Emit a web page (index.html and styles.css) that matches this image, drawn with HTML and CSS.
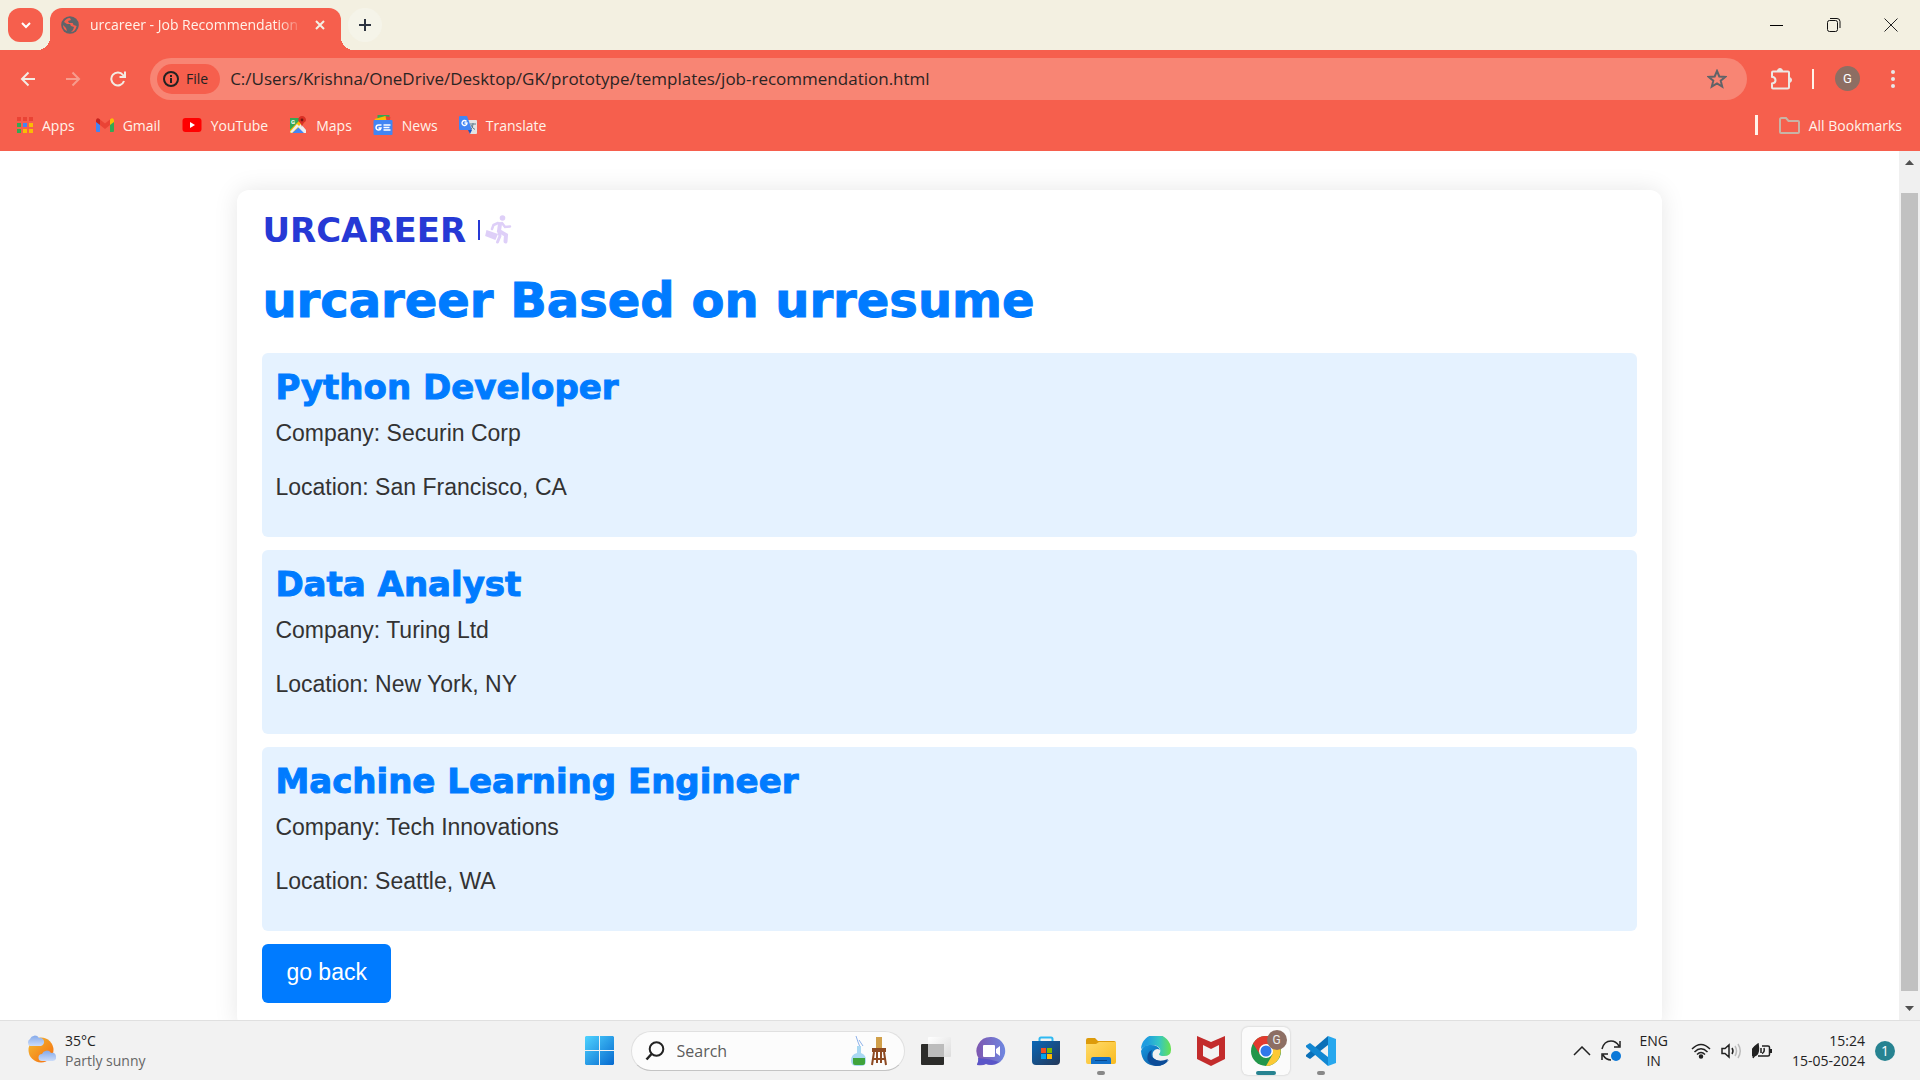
FILE: index.html
```html
<!DOCTYPE html>
<html lang="en">
<head>
<meta charset="utf-8">
<meta name="viewport" content="width=device-width, initial-scale=1">
<title>urcareer - Job Recommendation</title>
<link rel="stylesheet" href="styles.css">
</head>
<body>
<div class="desktop">
  <header class="tabstrip">
    <button class="tab-search" aria-label="Search tabs"><svg width="12" height="12" viewBox="0 0 12 12" fill="none" stroke="#fff" stroke-width="2"><path d="M2 4l4 4 4-4"/></svg></button>
    <div class="tab">
      <svg width="18" height="18" viewBox="0 0 18 18"><circle cx="9" cy="9" r="8.8" fill="#5f6368"/><path d="M9 2c-3 0-5 2-6 4l3 2h3l1 2 3 1-1 3-2 2c3 0 5-3 5.600-6l-3-1-1-2H8l-1-2 3-1z" fill="#f65f4d"/><path d="M2 9l3 3 1 3C3 14 2 11 2 9z" fill="#f65f4d"/></svg>
      <span class="tab-title">urcareer - Job Recommendation</span>
      <button class="plain" aria-label="Close tab"><svg width="12" height="12" viewBox="0 0 12 12" fill="none" stroke="#f4f0e4" stroke-width="2"><path d="M2 2l8 8M10 2l-8 8"/></svg></button>
    </div>
    <button class="new-tab" aria-label="New tab"><svg width="14" height="14" viewBox="0 0 14 14" stroke="#2d3440" stroke-width="2"><path d="M7 1v12M1 7h12"/></svg></button>
    <div class="window-buttons">
      <button class="plain" aria-label="Minimize"><svg width="14" height="14" viewBox="0 0 14 14" stroke="#000"><path d="M0 7.500h13"/></svg></button>
      <button class="plain" aria-label="Restore"><svg width="14" height="14" viewBox="0 0 14 14" fill="none" stroke="#111"><rect x=".5" y="2.500" width="10" height="11" rx="2"/><path d="M3 .5h7a3 3 0 0 1 3 3V10" stroke-width="1"/></svg></button>
      <button class="plain" aria-label="Close"><svg width="14" height="14" viewBox="0 0 14 14" stroke="#222"><path d="M.5.5l13 13M13.500.5l-13 13"/></svg></button>
    </div>
  </header>

  <nav class="toolbar">
    <div class="nav-buttons">
      <button class="plain" aria-label="Back"><svg width="16" height="16" viewBox="0 0 16 16" fill="none" stroke="#f3ece4" stroke-width="2"><path d="M15 8H2M8.500 1.500L2 8l6.500 6.500"/></svg></button>
      <button class="plain" aria-label="Forward"><svg width="16" height="16" viewBox="0 0 16 16" fill="none" stroke="#f79c8d" stroke-width="2"><path d="M1 8h13M7.500 1.500L14 8l-6.500 6.500"/></svg></button>
      <button class="plain" aria-label="Reload"><svg width="16" height="16" viewBox="0 0 16 16" fill="none" stroke="#f3ece4" stroke-width="2"><path d="M14 10a6.500 6.500 0 1 1-1-6l1.500 2M15 .5V6H9.500"/></svg></button>
    </div>
    <div class="omnibox">
      <button class="chip"><svg width="16" height="16" viewBox="0 0 16 16"><circle cx="8" cy="8" r="7" fill="none" stroke="#222" stroke-width="2"/><path d="M8 7v5M8 4v2" stroke="#222" stroke-width="2"/></svg>File</button>
      <input class="url" aria-label="Address" value="C:/Users/Krishna/OneDrive/Desktop/GK/prototype/templates/job-recommendation.html">
      <button class="plain" aria-label="Bookmark this page"><svg width="20" height="20" viewBox="0 0 20 20" fill="none" stroke="#606368" stroke-width="2"><path d="M10 2l2.300 5.500 6 .4-4.600 3.800 1.500 5.800L10 14.300l-5.200 3.200 1.500-5.800L1.700 7.900l6-.4z"/></svg></button>
    </div>
    <div class="toolbar-end">
      <button class="plain" aria-label="Extensions"><svg width="22" height="22" viewBox="0 0 22 22"><path d="M2 4.500Q2 3.500 3 3.500h15q1 0 1 1V19q0 1.500-1.500 1.500H3Q2 20.500 2 19.500v-4q3.500-.5 3.500-3.300T2 8.800z" fill="none" stroke="#ece8e4" stroke-width="2"/><path d="M7.500 3a2.500 2.500 0 0 1 5 0zM19 9.500a2.500 2.500 0 0 1 0 5z" fill="#ece8e4" stroke="#ece8e4"/></svg></button>
      <span class="rule thin"></span>
      <button class="avatar">G</button>
      <button class="plain" aria-label="Menu"><svg width="4" height="20" viewBox="0 0 4 20" fill="#e8e8e8"><circle cx="2" cy="3" r="2"/><circle cx="2" cy="10" r="2"/><circle cx="2" cy="17" r="2"/></svg></button>
    </div>
  </nav>

  <nav class="bookmarks">
    <a href="#"><svg width="16" height="18" viewBox="0 0 16 18"><path fill="#ea4335" d="M0 1h4v4H0zM6 1h4v4H6zM12 1h4v4h-4z"/><path fill="#34a853" d="M0 7h4v4H0zM0 13h4v4H0z"/><path fill="#4285f4" d="M6 7h4v4H6z"/><path fill="#fbbc04" d="M12 7h4v4h-4zM6 13h4v4H6zM12 13h4v4h-4z"/></svg>Apps</a>
    <a href="#"><svg width="18" height="14" viewBox="0 0 18 14"><path fill="#4285f4" d="M0 3l4 3v8H1q-1 0-1-1z"/><path fill="#34a853" d="M14 6l4-3v10q0 1-1 1h-3z"/><path fill="#fbbc04" d="M14 1.500Q17-1 18 2v2l-4 3z"/><path fill="#c5221f" d="M0 2Q1-1 4 1.500V7L0 4z"/><path fill="#ea4335" d="M4 1.500l5 4 5-4V7l-5 4-5-4z"/></svg>Gmail</a>
    <a href="#"><svg width="20" height="14" viewBox="0 0 19 14"><rect width="19" height="14" rx="3" fill="#f00"/><path d="M7.500 4v6l5-3z" fill="#fff"/></svg>YouTube</a>
    <a href="#"><svg width="18" height="18" viewBox="0 0 18 18"><path fill="#34a853" d="M1 2h12L1 15z"/><path fill="#4285f4" d="M9 10l7 7H2z"/><path fill="#fbbc04" d="M1 14L13 2l3 4L3 17H1z"/><path fill="#eee" d="M9 11l3-3 5 6v3h-2zM1 16l7-8 2 2-7 7z"/><path fill="#d93025" d="M13 0a3.700 3.700 0 0 0-3.700 4c0 2 3.200 3 3.700 7 .5-4 4-5 4-7A3.900 3.900 0 0 0 13 0z"/><circle cx="13" cy="4" r="1.400" fill="#7b1712"/><text x="2" y="8" class="tiny">G</text></svg>Maps</a>
    <a href="#"><svg width="20" height="20" viewBox="0 0 19 20"><path fill="#34a853" d="M4 0h12v5H4z"/><path fill="#ea4335" d="M11 1l6 1-1 6-7-2z"/><path fill="#fbbc04" d="M1 4l11-3 1 5H2z"/><rect y="5" width="19" height="15" rx="1" fill="#4285f4"/><path d="M8 10H5a2.500 2.500 0 1 0 2.500 3H5M10 10h7M10 12.500h6M10 15h7" fill="none" stroke="#fff" stroke-width="1.500"/></svg>News</a>
    <a href="#"><svg width="18" height="18" viewBox="0 0 18 18"><path d="M7 4h10q1 0 1 1v12q0 1-1 1H11z" fill="#e3e3e3"/><path d="M1 0h7l5 14H1q-1 0-1-1V1q0-1 1-1z" fill="#4285f4"/><path d="M9 14h4l-2 4z" fill="#1a56c4"/><path d="M7.500 5.500A2.500 2.500 0 1 0 8 7H5.500" fill="none" stroke="#fff" stroke-width="1.400"/><path d="M11 8h6M14 7v1q0 4-2.500 5.500M12 9q1 3 4 4.500" fill="none" stroke="#607d8b"/></svg>Translate</a>
    <span class="rule all-rule"></span>
    <a href="#" class="all"><svg width="21" height="17" viewBox="0 0 21 17" fill="none" stroke="#c9b3a5" stroke-width="2"><path d="M1 2.500Q1 1 2.500 1H7l2.500 3H19q1 0 1 1v10q0 1-1 1H2q-1 0-1-1z"/></svg>All Bookmarks</a>
  </nav>

  <div class="viewport">
    <main class="page">
      <section class="container">
        <div class="logo">
          <span class="wordmark">URCAREER</span><span class="logo-bar"></span>
          <svg width="27" height="29" viewBox="0 0 27 29" fill="none" stroke="#decff8" stroke-linecap="round"><circle cx="17.500" cy="3" r="2.800" fill="#decff8" stroke="none"/><path d="M15 9l-1 7 7 4-.5 6.500" stroke-width="4"/><path d="M14 18l1 3-2.500 6" stroke-width="3"/><path d="M13 8L8.500 10 7 14M17 8l3 4 5-.5" stroke-width="2.500"/><path d="M2 16l10 3.500-2 4.500L1 20.500z" fill="#decff8" stroke-width="1.500"/></svg>
        </div>
        <h1>urcareer Based on urresume</h1>
        <article class="job"><h2>Python Developer</h2><p>Company: Securin Corp</p><p>Location: San Francisco, CA</p></article>
        <article class="job"><h2>Data Analyst</h2><p>Company: Turing Ltd</p><p>Location: New York, NY</p></article>
        <article class="job"><h2>Machine Learning Engineer</h2><p>Company: Tech Innovations</p><p>Location: Seattle, WA</p></article>
        <button class="go-back">go back</button>
      </section>
    </main>
    <div class="scrollbar">
      <svg width="9" height="5" viewBox="0 0 9 5"><path d="M0 5l4.500-5L9 5z" fill="#505050"/></svg>
      <span class="thumb"></span>
      <svg width="9" height="5" viewBox="0 0 9 5"><path d="M0 0l4.500 5L9 0z" fill="#505050"/></svg>
    </div>
  </div>

  <footer class="taskbar">
    <div class="weather">
      <svg width="30" height="28" viewBox="0 0 30 28"><defs><linearGradient id="sun" x2="1" y2="1"><stop stop-color="#f3bd35"/><stop offset="1" stop-color="#f66a0c"/></linearGradient><linearGradient id="cloud" x2="0" y2="1"><stop stop-color="#84a9ea"/><stop offset="1" stop-color="#ccdcf9"/></linearGradient></defs><circle cx="15" cy="15" r="12.500" fill="url(#sun)"/><path d="M4 11a4 4 0 0 1 0-7 5 5 0 0 1 9-1 4 4 0 0 1 2 8z" fill="url(#cloud)"/><path d="M16 26a3.500 3.500 0 0 1 0-7 5 5 0 0 1 9-1 4 4 0 0 1 2 8z" fill="url(#cloud)"/></svg>
      <p>35°C<br><span class="muted">Partly sunny</span></p>
    </div>
    <div class="apps">
      <button class="app" aria-label="Start"><svg width="29" height="29" viewBox="0 0 29 29"><defs><linearGradient id="win" x2="1" y2="1"><stop stop-color="#4fd3ff"/><stop offset="1" stop-color="#0669cf"/></linearGradient></defs><path fill="url(#win)" d="M1 0h13v14H0V1zM15 0h13l1 1v13H15zM0 15h14v14H1l-1-1zM15 15h14v13l-1 1H15z"/></svg></button>
      <div class="search">
        <svg width="20" height="20" viewBox="0 0 20 20" fill="none" stroke="#222" stroke-width="2"><circle cx="11.500" cy="8" r="6.800"/><path d="M6.500 13L1.500 18.500" stroke-width="2.500"/></svg>
        <input aria-label="Search" placeholder="Search">
        <svg width="38" height="32" viewBox="0 0 38 32"><path d="M6 1l2 6 2 5M9 5l4 6" stroke="#8fb2ea" fill="none"/><path d="M7 11h4v7a8 8 0 0 1 5 8q0 5-5 5H7q-6 0-6-5a8 8 0 0 1 6-8z" fill="#a9d8f2"/><path d="M3 23h12v5q0 2-3 2H5q-2 0-2-2z" fill="#3fa33b"/><path d="M26 2h6v11h-6z" fill="#d1a04a"/><path d="M22 13h14v4H22z" fill="#8d4a22"/><path d="M24 17l-2 13M34 17l2 13M27 17v11M31 17v11M23 24h12" stroke="#8d4a22" stroke-width="2"/></svg>
      </div>
      <button class="app" aria-label="Task view"><svg width="30" height="30" viewBox="0 0 30 30"><defs><linearGradient id="tv" x2="1" y2="1"><stop stop-color="#fff"/><stop offset="1" stop-color="#dcdcdc"/></linearGradient></defs><rect y="8" width="23" height="21" rx="1" fill="#2c2c2a"/><rect x="7" y="1" width="23" height="20" rx="1" fill="url(#tv)"/><path d="M7 8h16v13H7z" fill="#bcbcbc"/></svg></button>
      <button class="app" aria-label="Chat"><svg width="30" height="30" viewBox="0 0 30 30"><defs><linearGradient id="chat" x2="1"><stop stop-color="#7e57b0"/><stop offset="1" stop-color="#6f87e0"/></linearGradient></defs><path d="M15 1a14 14 0 1 1-5 27q-3 2-9 1l2-6A14 14 0 0 1 15 1z" fill="url(#chat)"/><path d="M1 29q5 0 9-1 8 2 13-2-8-3-21-4 1 3-1 7z" fill="#5a55c8"/><rect x="7" y="9" width="12" height="12" rx="1" fill="#fff"/><path d="M20 13l4-3v10l-4-3z" fill="#fff"/></svg></button>
      <button class="app" aria-label="Store"><svg width="30" height="30" viewBox="0 0 30 30"><defs><linearGradient id="st" x2="1" y2="1"><stop stop-color="#0867b8"/><stop offset="1" stop-color="#253858"/></linearGradient></defs><path d="M8.500 6V3q0-1.500 1.500-1.500h10q1.500 0 1.500 1.500v3" fill="none" stroke="#2fb9f2" stroke-width="2"/><path d="M1 5h28v20q0 4-4 4H5q-4 0-4-4z" fill="url(#st)"/><path d="M10 12h5v5h-5z" fill="#f25022"/><path d="M16 12h5v5h-5z" fill="#7fba00"/><path d="M10 18h5v5h-5z" fill="#00a4ef"/><path d="M16 18h5v5h-5z" fill="#ffb900"/></svg></button>
      <button class="app running" aria-label="File Explorer"><svg width="30" height="30" viewBox="0 0 30 30"><defs><linearGradient id="fo" x2="1" y2="1"><stop stop-color="#ffdb6b"/><stop offset="1" stop-color="#f9bb20"/></linearGradient></defs><path d="M0 4q0-2 2-2h7l3 3h16q2 0 2 2v3H0z" fill="#dd9b0b"/><path d="M0 8h10l3-2h17v20q0 2-2 2H2q-2 0-2-2z" fill="url(#fo)"/><path d="M5 28v-5q0-2 2-2h16q2 0 2 2v5z" fill="#1170ca"/><path d="M9 24.500h12" stroke="#08468a"/></svg></button>
      <button class="app" aria-label="Edge"><svg width="30" height="30" viewBox="0 0 30 30"><defs><linearGradient id="e1" x2="1"><stop offset=".2" stop-color="#1f9de0"/><stop offset=".6" stop-color="#35c5c5"/><stop offset="1" stop-color="#68e34e"/></linearGradient><linearGradient id="e2" x2="1" y2="1"><stop stop-color="#1599e2"/><stop offset="1" stop-color="#0b4b95"/></linearGradient></defs><path d="M0 13A15 15 0 0 1 30 14q0 6-7 6-5 0-5-2 2-2 1-5-2-4-8-4Q4 9 0 13z" fill="url(#e1)"/><path d="M0 15Q2 8 10 9q7 0 9 5-4-3-7 2-2 5 3 8 6 3 13 0-5 6-13 6Q1 29 0 15z" fill="url(#e2)"/><path d="M11 14q-2 5 1 8 6 5 15 1-2 7-12 7Q4 27 7 18q1-3 4-4z" fill="#0c4c98"/></svg></button>
      <button class="app" aria-label="McAfee"><svg width="28" height="30" viewBox="0 0 28 30"><path d="M0 0l14 6L28 0v23l-14 7-14-7z" fill="#c32c2c"/><path d="M6 9l8 4 8-4v11l-8 4-8-4z" fill="#f2f2f2"/></svg></button>
      <button class="app active" aria-label="Chrome"><svg width="30" height="30" viewBox="0 0 30 30"><circle cx="15" cy="15" r="15" fill="#22964a"/><path d="M2 7.500A15 15 0 0 1 28 7.500L15 8.500 9 18.500z" fill="#e23a2e"/><path d="M15 8h13A15 15 0 0 1 15 30l6.500-11.500z" fill="#fcc934"/><circle cx="15" cy="15" r="7" fill="#fff"/><circle cx="15" cy="15" r="5.500" fill="#2f78ea"/></svg><span class="badge">G</span></button>
      <button class="app running" aria-label="Visual Studio Code"><svg width="30" height="30" viewBox="0 0 30 30"><path d="M22 0l8 3v24l-8 3z" fill="#28a8ee"/><path d="M22 0v9L4 23 0 20.500v-1.500z" fill="#0b70b8"/><path d="M22 30v-9L4 7 0 9.500V11z" fill="#1287d2"/></svg></button>
    </div>
    <div class="tray">
      <svg width="18" height="10" viewBox="0 0 18 10" fill="none" stroke="#222" stroke-width="1.500"><path d="M1 9l8-8 8 8"/></svg>
      <svg class="sync" width="20" height="21" viewBox="0 0 20 21" fill="none" stroke="#222" stroke-width="1.500"><path d="M1 9Q3 1 10 1q5 0 8 5M19 1v6h-6M1 20v-6h6M2 15q3 5 8 5"/><circle cx="15" cy="16" r="5" fill="#0a78d8" stroke="none"/></svg>
      <p class="lang">ENG<br>IN</p>
      <div class="status">
        <svg width="20" height="16" viewBox="0 0 20 16" fill="none" stroke="#222" stroke-width="1.500"><path d="M1 6q9-9 18 0M3.500 9q6.500-6.500 13 0M6 11.500q4-4 8 0"/><circle cx="10" cy="13.500" r="1.500" fill="#222"/></svg>
        <svg width="21" height="16" viewBox="0 0 21 16" fill="none" stroke="#222" stroke-width="1.500"><path d="M1 5.500h3L8 2v12l-4-3.500H1zM11 5q2 3 0 6"/><path d="M14 3q3 5 0 10M17 1q4.500 7 0 14" stroke="#bbb"/></svg>
        <svg width="20" height="16" viewBox="0 0 20 16" fill="none" stroke="#222" stroke-width="1.500"><path d="M10 3h6q1.500 0 1.500 1.500v7Q17.500 13 16 13H6"/><path d="M18 6h2v4h-2z" fill="#222" stroke="none"/><path d="M6 1q-9 6-5 12Q8 13 6 1z" fill="#222"/><path d="M1 15L5 8M9 5v5M12 5q1 4-2 5.500"/></svg>
      </div>
      <p class="clock">15:24<br>15-05-2024</p>
      <span class="count">1</span>
    </div>
  </footer>
</div>
</body>
</html>
```
FILE: styles.css
```css
* { box-sizing: border-box; }
body { margin: 0; font-family: "Open Sans", "Noto Sans", sans-serif; font-size: 14px; color: #222; }
button, input { font: inherit; color: inherit; border: 0; padding: 0; margin: 0; background: none; }
svg { display: block; flex: none; }
p, h1, h2 { margin: 0; }
.desktop { height: 100vh; display: flex; flex-direction: column; overflow: hidden; background: #fff; }
.plain { display: grid; place-items: center; }

/* Tab strip */
.tabstrip { height: 50px; flex: none; display: flex; background: #f3f0e1; padding: 8px 22px 0 8px; }
.tab-search { width: 35px; height: 34px; border-radius: 12px; background: #f65f4d; display: grid; place-items: center; }
.tab { position: relative; width: 291px; margin-left: 7px; padding: 0 15px 9px 11px; border-radius: 12px 12px 0 0; background: #f65f4d; display: flex; align-items: center; gap: 11px; color: #fff3ea; }
.tab::before, .tab::after { content: ""; position: absolute; bottom: 0; width: 13px; height: 13px; }
.tab::before { right: 100%; background: radial-gradient(circle at 0 0, transparent 13px, #f65f4d 13px); }
.tab::after { left: 100%; background: radial-gradient(circle at 100% 0, transparent 13px, #f65f4d 13px); }
.tab-title { flex: 1; white-space: nowrap; -webkit-mask-image: linear-gradient(90deg, #000 88%, transparent); mask-image: linear-gradient(90deg, #000 88%, transparent); }
.new-tab { width: 34px; height: 34px; margin-left: 7px; border-radius: 50%; background: #f5f4e9; display: grid; place-items: center; }
.window-buttons { margin-left: auto; height: 33px; display: flex; align-items: center; gap: 43px; }

/* Toolbar */
.toolbar { height: 57px; flex: none; display: flex; align-items: center; background: #f65f4d; padding: 0 25px 0 20px; }
.nav-buttons { display: flex; gap: 29px; }
.omnibox { flex: 1; height: 42px; margin-left: 24px; border-radius: 21px; background: #f88574; display: flex; align-items: center; gap: 10px; padding: 0 20px 0 7px; }
.chip { height: 30px; padding: 0 12px 0 6px; border-radius: 15px; background: #f65f4d; display: flex; align-items: center; gap: 7px; }
.url { flex: 1; min-width: 0; font-size: 17px; color: #2b2423; }
.toolbar-end { display: flex; align-items: center; margin-left: 23px; }
.rule { width: 3px; height: 20px; background: #fff3ea; }
.thin { width: 2px; margin: 0 21px 0 20px; }
.avatar { width: 25px; height: 25px; border-radius: 50%; background: #8d6e63; color: #fff; font: 13px Roboto, sans-serif; margin-right: 31px; }

/* Bookmarks bar */
.bookmarks { height: 44px; flex: none; display: flex; align-items: center; gap: 21px; padding: 0 18px 8px 17px; background: #f65f4d; }
.bookmarks a { display: flex; align-items: center; gap: 9px; color: #fff3ea; text-decoration: none; }
.all-rule { margin-left: auto; }
.tiny { font: bold 6px Roboto, sans-serif; fill: #fff; }

/* Web page */
.viewport { flex: 1; min-height: 0; display: grid; grid-template-columns: 1fr 21px; }
.page { overflow: hidden; padding-top: 39px; color: #333; font-family: "Liberation Sans", Arial, sans-serif; font-size: 23px; }
.container { width: 75%; min-height: 100%; margin: 0 auto; padding: 25px; border-radius: 12px; background: #fff; box-shadow: 0 0 25px rgba(0, 0, 0, .1); }
.logo { width: 250px; height: 29px; display: flex; align-items: center; }
.wordmark { font: bold 34px "DejaVu Sans", sans-serif; color: #2639d5; }
.logo-bar { width: 2px; height: 20px; margin: 0 5px 0 auto; background: #2639d5; }
h1, h2 { font-family: "Arial Black", "DejaVu Sans", sans-serif; font-weight: bold; -webkit-text-stroke: 1px #007bff; color: #007bff; }
h1 { font-size: 48px; line-height: 60px; margin: 26px 0 23px; }
h2 { font-size: 34px; line-height: 42px; margin-bottom: 12px; }
.job { height: 184px; margin-bottom: 13px; padding: 13px; border-radius: 6px; background: #e5f2ff; }
.job p { line-height: 27px; margin-bottom: 27px; }
.go-back { height: 59px; padding: 0 24px 3px; border-radius: 6px; background: #007bff; color: #fff; }
.scrollbar { background: #f0f0f0; display: flex; flex-direction: column; align-items: center; justify-content: space-between; padding: 9px 0; }
.thumb { flex: 1; width: 17px; margin: 28px 0 15px; background: #c1c1c1; }

/* Taskbar */
.taskbar { height: 60px; flex: none; display: grid; grid-template-columns: 1fr auto 1fr; align-items: center; background: #f2f2f2; border-top: 1px solid #e0e0e0; }
.weather { display: flex; gap: 9px; padding-left: 26px; line-height: 20px; }
.weather svg { margin-top: 4px; }
.muted { color: #666; }
.apps { display: flex; align-items: center; gap: 7px; }
.app { position: relative; width: 48px; height: 48px; border-radius: 6px; display: grid; place-items: center; }
.active { background: #fbfbfb; box-shadow: 0 0 2px #bbb; }
.running::after, .active::after { content: ""; position: absolute; bottom: 0; width: 8px; height: 4px; border-radius: 2px; background: #888; }
.active::after { width: 20px; background: #278391; }
.badge { position: absolute; top: 3px; right: 3px; width: 20px; height: 20px; border-radius: 50%; background: #8d6e63; color: #eee; font: 12px/20px Roboto, sans-serif; }
.search { width: 274px; height: 40px; padding: 0 16px 0 13px; border: 1px solid #e0e0e0; border-bottom-color: #c4c4c4; border-radius: 20px; background: #fcfcfc; display: flex; align-items: center; gap: 12px; font-size: 16px; }
.search input { flex: 1; min-width: 0; }
.search input::placeholder { color: #5c5c5c; opacity: 1; }
.tray { display: flex; align-items: center; justify-content: flex-end; padding-right: 25px; line-height: 20px; }
.sync { margin: 0 18px 0 10px; }
.lang { text-align: center; }
.status { display: flex; gap: 10px; margin: 0 20px 0 23px; }
.clock { text-align: right; }
.count { width: 20px; height: 20px; margin-left: 10px; border-radius: 50%; background: #278391; color: #fff; text-align: center; }
```
